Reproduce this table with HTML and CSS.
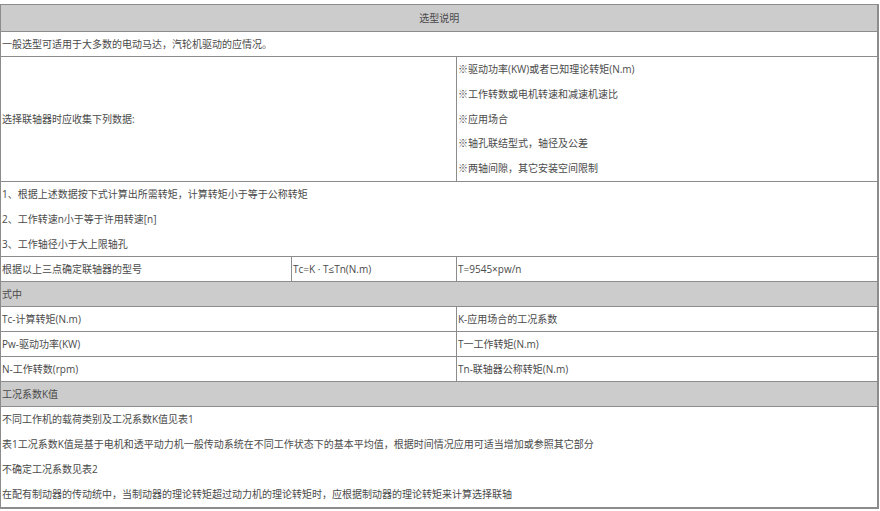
FILE: index.html
```html
<!DOCTYPE html>
<html lang="zh-CN">
<head>
<meta charset="utf-8">
<title>选型说明</title>
<link rel="stylesheet" href="styles.css">
</head>
<body>
<table class="spec">
  <colgroup>
    <col class="c1">
    <col class="c2">
    <col class="c3">
  </colgroup>
  <tr class="head top">
    <td colspan="3" class="center">选型说明</td>
  </tr>
  <tr>
    <td colspan="3">一般选型可适用于大多数的电动马达，汽轮机驱动的应情况。</td>
  </tr>
  <tr>
    <td colspan="2">选择联轴器时应收集下列数据:</td>
    <td>
      <div class="line">※驱动功率(KW)或者已知理论转矩(N.m)</div>
      <div class="line">※工作转数或电机转速和减速机速比</div>
      <div class="line">※应用场合</div>
      <div class="line">※轴孔联结型式，轴径及公差</div>
      <div class="line">※两轴间隙，其它安装空间限制</div>
    </td>
  </tr>
  <tr>
    <td colspan="3">
      <div class="line">1、根据上述数据按下式计算出所需转矩，计算转矩小于等于公称转矩</div>
      <div class="line">2、工作转速n小于等于许用转速[n]</div>
      <div class="line">3、工作轴径小于大上限轴孔</div>
    </td>
  </tr>
  <tr>
    <td>根据以上三点确定联轴器的型号</td>
    <td>Tc=K · T≤Tn(N.m)</td>
    <td>T=9545×pw/n</td>
  </tr>
  <tr class="head">
    <td colspan="3">式中</td>
  </tr>
  <tr>
    <td colspan="2">Tc-计算转矩(N.m)</td>
    <td>K-应用场合的工况系数</td>
  </tr>
  <tr>
    <td colspan="2">Pw-驱动功率(KW)</td>
    <td>T一工作转矩(N.m)</td>
  </tr>
  <tr>
    <td colspan="2">N-工作转数(rpm)</td>
    <td>Tn-联轴器公称转矩(N.m)</td>
  </tr>
  <tr class="head">
    <td colspan="3">工况系数K值</td>
  </tr>
  <tr>
    <td colspan="3">
      <div class="line">不同工作机的载荷类别及工况系数K值见表1</div>
      <div class="line">表1工况系数K值是基于电机和透平动力机一般传动系统在不同工作状态下的基本平均值，根据时间情况应用可适当增加或参照其它部分</div>
      <div class="line">不确定工况系数见表2</div>
      <div class="line">在配有制动器的传动统中，当制动器的理论转矩超过动力机的理论转矩时，应根据制动器的理论转矩来计算选择联轴</div>
    </td>
  </tr>
</table>
</body>
</html>
```
FILE: styles.css
```css
html, body {
  margin: 0;
  padding: 0;
  background: #ffffff;
}

body {
  padding-top: 4px;
  font-family: "Open Sans", "Noto Sans CJK SC", sans-serif;
  font-size: 10px;
  color: #4a4a4a;
}

.spec {
  width: 877px;
  border-collapse: collapse;
  table-layout: fixed;
  border-right: 2px solid #8c8c8c;
  border-bottom: 2px solid #8c8c8c;
}

.c1 { width: 291px; }
.c2 { width: 165px; }
.c3 { width: 421px; }

.spec td {
  border: 1px solid #8c8c8c;
  padding: 0 0 0 1px;
  height: 24px;
  line-height: 24px;
  vertical-align: middle;
  white-space: nowrap;
  overflow: hidden;
}

.spec .head td {
  background: #cccccc;
}

.spec .top td {
  height: 26px;
}

.spec td.center {
  text-align: center;
}

.line {
  line-height: 24.8px;
}
```
